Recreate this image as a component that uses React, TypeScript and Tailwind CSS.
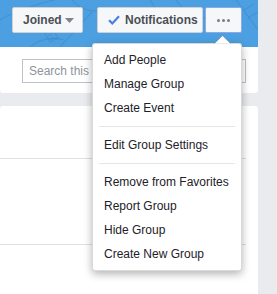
import React from "react";

const menu: (string | null)[] = [
  "Add People",
  "Manage Group",
  "Create Event",
  null,
  "Edit Group Settings",
  null,
  "Remove from Favorites",
  "Report Group",
  "Hide Group",
  "Create New Group",
];

function CoverDoodles() {
  return (
    <svg
      className="absolute inset-0 pointer-events-none"
      width="258"
      height="47"
      viewBox="0 0 258 47"
      fill="none"
      stroke="rgba(20,60,110,0.12)"
      strokeWidth="1.2"
    >
      <path d="M0 20 C 20 8, 45 2, 70 -4" />
      <path d="M60 47 L 92 12" />
      <path d="M72 0 C 80 10, 92 14, 110 8" />
      <path d="M30 47 C 38 40, 52 36, 64 40" />
      <path d="M44 32 l 8 -4 l 6 10 l -8 4 z" />
      <path d="M48 36 l 4 -2 M50 40 l 4 -2" />
      <path d="M150 0 L 170 30" />
      <path d="M176 0 C 186 14, 200 20, 214 18" />
      <path d="M236 0 L 258 30" />
      <path d="M244 10 l 10 -6 M248 18 l 10 -6" />
    </svg>
  );
}

export default function App() {
  return (
    <div
      className="relative w-[277px] h-[294px] overflow-hidden bg-[#e9ebee] text-[12px] text-[#1d2129]"
      style={{ fontFamily: '"Liberation Sans", Arial, Helvetica, sans-serif' }}
    >
      <div className="w-[258px] flex flex-col">
        {/* cover strip with action buttons */}
        <div className="relative h-[47px] bg-[#4ca0e1]">
          <CoverDoodles />
          <div className="relative flex items-start pt-[7px] pl-[12px]">
            <button className="h-[26px] w-[71px] flex items-center pl-[10px] bg-[#f6f7f9] border border-[#ced0d4] rounded-[2px] font-bold text-[#4b4f56]">
              Joined
              <svg width="9" height="5" viewBox="0 0 9 5" className="ml-[3px] mt-[1px]">
                <path d="M0 0h9L4.5 5z" fill="#7f838a" />
              </svg>
            </button>
            <button className="ml-[14px] h-[26px] w-[106px] flex items-center pl-[10px] bg-[#f6f7f9] border border-[#ced0d4] rounded-[2px] font-bold text-[#4b4f56]">
              <svg width="12" height="10" viewBox="0 0 12 10" className="mr-[5px]">
                <path
                  d="M1 5.2 L4.3 8.4 L11 1.2"
                  stroke="#4a7fe0"
                  strokeWidth="2.2"
                  fill="none"
                />
              </svg>
              Notifications
            </button>
            <button className="ml-[2px] h-[26px] w-[37px] flex items-center justify-center gap-[2px] bg-[#f6f7f9] border border-[#8ea9e6] rounded-[2px]">
              <span className="w-[3px] h-[3px] rounded-full bg-[#7a7e85]" />
              <span className="w-[3px] h-[3px] rounded-full bg-[#7a7e85]" />
              <span className="w-[3px] h-[3px] rounded-full bg-[#7a7e85]" />
            </button>
          </div>
        </div>

        {/* search section */}
        <div className="h-[46px] bg-white rounded-b-[3px] pt-[12px] pl-[22px] pr-[12px]">
          <div className="h-[24px] border border-[#bec3c9] flex items-center pl-[6px] text-[#90949c]">
            Search this group
          </div>
        </div>

        {/* feed card */}
        <div className="mt-[13px] h-[200px] bg-white rounded-t-[3px] pr-[12px]">
          <div className="h-[53px] border-b border-[#dddfe2]" />
          <div className="h-[86px] border-b border-[#dddfe2]" />
        </div>
      </div>

      {/* dropdown menu */}
      <div className="absolute left-[92px] top-[43px] w-[150px]">
        <svg
          className="absolute left-[122px] top-[-8px]"
          width="17"
          height="9"
          viewBox="0 0 17 9"
        >
          <path d="M0.5 8.5 L8.5 0.8 L16.5 8.5" fill="white" stroke="rgba(0,0,0,0.15)" />
        </svg>
        <div className="bg-white border border-[rgba(0,0,0,0.15)] rounded-[3px] shadow-[0_3px_8px_rgba(0,0,0,0.3)] py-[4px]">
          {menu.map((item, i) =>
            item === null ? (
              <div key={i} className="mx-[6px] my-[6px] h-px bg-[#e5e6e9]" />
            ) : (
              <div key={i} className="h-[24px] leading-[24px] pl-[11px] whitespace-nowrap">
                {item}
              </div>
            )
          )}
        </div>
        <div className="absolute left-[123px] top-[1px] w-[15px] h-[2px] bg-white" />
      </div>
    </div>
  );
}
